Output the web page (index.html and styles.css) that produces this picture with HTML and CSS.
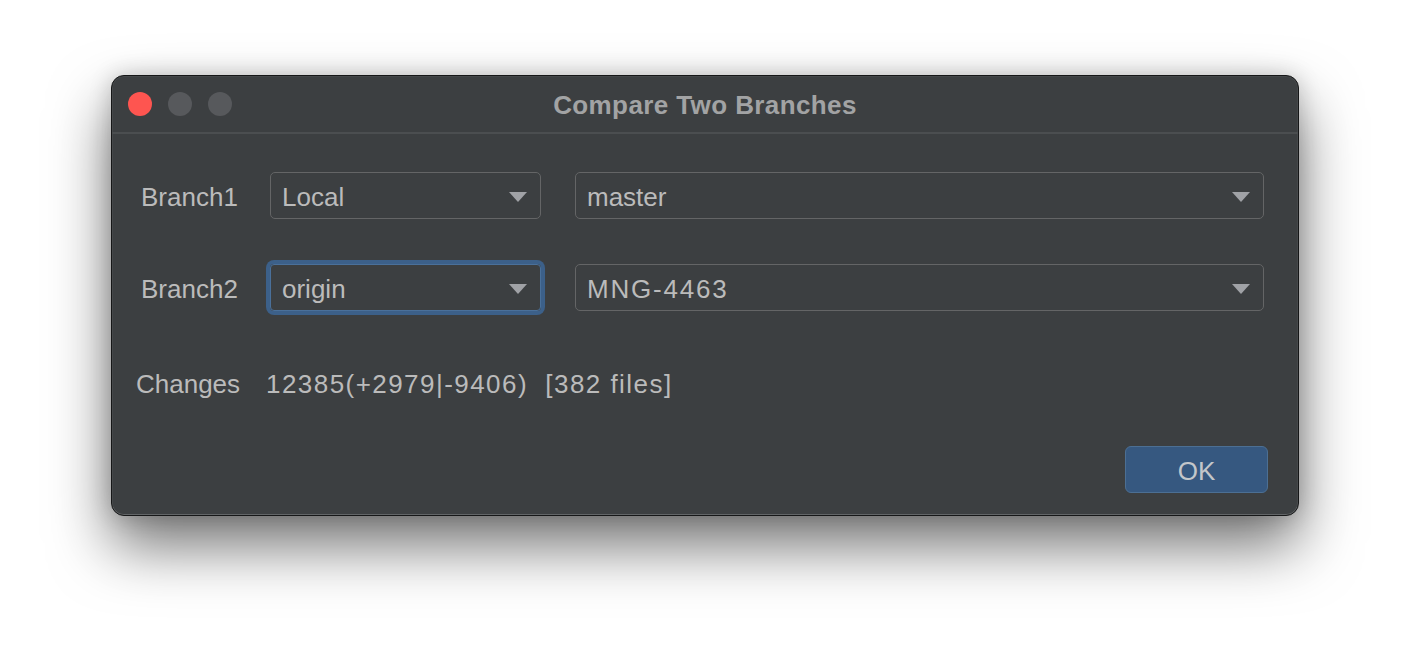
FILE: index.html
```html
<!DOCTYPE html>
<html lang="en">
<head>
<meta charset="utf-8">
<title>Compare Two Branches</title>
<link rel="stylesheet" href="styles.css">
</head>
<body>
<div class="window">
  <div class="titlebar">
    <div class="lights">
      <span class="light red"></span>
      <span class="light grey"></span>
      <span class="light grey"></span>
    </div>
    <div class="title">Compare Two Branches</div>
    <div class="spacer"></div>
  </div>
  <div class="content">
    <div class="form">
      <div class="label">Branch1</div>
      <div class="combo"><span class="value">Local</span><span class="arrow"></span></div>
      <div class="combo wide"><span class="value">master</span><span class="arrow"></span></div>
      <div class="label">Branch2</div>
      <div class="combo focused"><span class="value">origin</span><span class="arrow"></span></div>
      <div class="combo wide"><span class="value mng">MNG-4463</span><span class="arrow"></span></div>
    </div>
    <div class="changes">
      <span class="changes-label">Changes</span>
      <span class="changes-value">12385(+2979|-9406)&nbsp; [382 files]</span>
    </div>
    <div class="actions">
      <button class="ok">OK</button>
    </div>
  </div>
</div>
</body>
</html>
```
FILE: styles.css
```css
html, body {
  margin: 0;
  padding: 0;
  background: #ffffff;
}
body {
  box-sizing: border-box;
  min-height: 664px;
  font-family: "Liberation Sans", Arial, sans-serif;
  font-size: 26px;
  line-height: 30px;
  color: #bbbbbb;
  padding: 75px 0 0 111px;
}
.window {
  box-sizing: border-box;
  width: 1188px;
  background: #3c3f41;
  border: 1px solid #161718;
  border-radius: 13px;
  box-shadow:
    inset 0 -1px 0 rgba(255, 255, 255, 0.16),
    inset 0 0 0 1px rgba(255, 255, 255, 0.05),
    0 30px 60px rgba(0, 0, 0, 0.55),
    0 0 22px rgba(0, 0, 0, 0.18);
  overflow: hidden;
}
.titlebar {
  height: 56px;
  border-bottom: 2px solid #4b4e50;
  display: grid;
  grid-template-columns: 1fr auto 1fr;
  align-items: center;
}
.lights {
  display: flex;
  gap: 16px;
  padding-left: 16px;
}
.light {
  width: 24px;
  height: 24px;
  border-radius: 50%;
  display: block;
}
.light.red { background: #fe5550; }
.light.grey { background: #57595c; }
.title {
  font-weight: bold;
  color: #a2a3a4;
  letter-spacing: 0.4px;
  padding-top: 1px;
}
.content {
  padding: 38px 34px 22px 29px;
}
.form {
  display: grid;
  grid-template-columns: 129px 271px 1fr;
  row-gap: 45px;
}
.label {
  display: flex;
  align-items: center;
  padding-top: 3px;
  white-space: nowrap;
}
.combo {
  box-sizing: border-box;
  height: 47px;
  border: 1px solid #646566;
  border-radius: 5px;
  display: flex;
  align-items: center;
  justify-content: space-between;
  padding: 3px 13px 0 11px;
}
.combo.wide {
  margin-left: 34px;
}
.combo.focused {
  border-color: #4a709a;
  box-shadow: 0 0 0 4px #3c6089;
  border-radius: 4px;
}
.value {
  white-space: nowrap;
}
.mng {
  letter-spacing: 1.8px;
}
.arrow {
  width: 0;
  height: 0;
  border-left: 9px solid transparent;
  border-right: 9px solid transparent;
  border-top: 10px solid #a0a2a6;
  margin-top: -1px;
}
.changes {
  display: flex;
  margin-top: 58px;
  margin-left: -5px;
}
.changes-label {
  width: 130px;
  flex: none;
}
.changes-value {
  white-space: nowrap;
  letter-spacing: 1.45px;
}
.actions {
  display: flex;
  justify-content: flex-end;
  margin-top: 47px;
  margin-right: -4px;
}
.ok {
  width: 143px;
  height: 47px;
  box-sizing: border-box;
  background: #365880;
  border: 1px solid #4c6f93;
  border-radius: 6px;
  color: #c3c6ca;
  font-family: "Liberation Sans", Arial, sans-serif;
  font-size: 26px;
  line-height: 30px;
  padding: 3px 0 0 0;
}
```
